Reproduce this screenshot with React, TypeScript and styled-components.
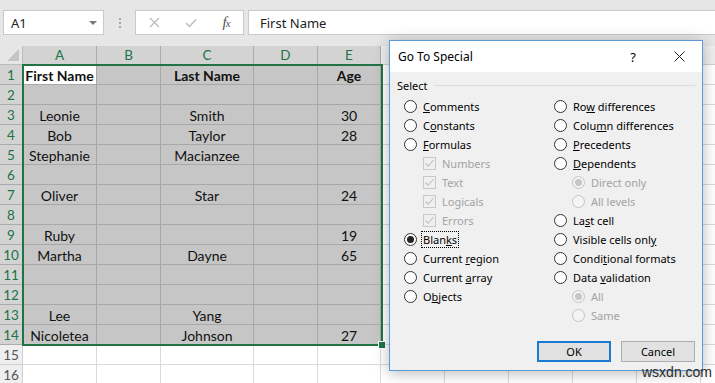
import React from 'react';
import styled, { createGlobalStyle, css } from 'styled-components';

const GlobalStyle = createGlobalStyle`
  html, body {
    margin: 0;
    padding: 0;
  }
  body {
    width: 715px;
    height: 383px;
    overflow: hidden;
    background: #ffffff;
    font-family: 'Lato', sans-serif;
  }
`;

const GREEN = '#217346';

const Window = styled.div`
  position: relative;
  width: 715px;
  height: 383px;
  overflow: hidden;
  display: flex;
  flex-direction: column;
  background: #ffffff;
`;

/* ---------- formula bar ---------- */

const FormulaBar = styled.div`
  height: 46px;
  flex: none;
  box-sizing: border-box;
  background: #e6e6e6;
  display: flex;
  align-items: flex-start;
  padding: 10px 0 0 3px;
`;

const NameBox = styled.div`
  width: 101px;
  height: 25px;
  box-sizing: border-box;
  background: #ffffff;
  border: 1px solid #c9c9c9;
  display: flex;
  align-items: center;
  justify-content: space-between;
  padding: 0 6px 0 7px;
  font-family: 'Noto Sans', sans-serif;
  font-size: 13px;
  color: #222;
`;

const DropArrow = styled.span`
  width: 0;
  height: 0;
  border-left: 4px solid transparent;
  border-right: 4px solid transparent;
  border-top: 4px solid #7a7a7a;
`;

const Grip = styled.div`
  width: 31px;
  height: 25px;
  display: flex;
  flex-direction: column;
  align-items: center;
  justify-content: center;
  gap: 2px;

  span {
    width: 2px;
    height: 2px;
    background: #a8a8a8;
  }
`;

const IconBox = styled.div`
  width: 109px;
  height: 25px;
  box-sizing: border-box;
  background: #ffffff;
  border: 1px solid #c9c9c9;
  display: grid;
  grid-template-columns: 36px 37px 34px;
  align-items: center;
  justify-items: center;
`;

const Fx = styled.span`
  font-family: 'Liberation Serif', serif;
  font-style: italic;
  font-size: 15px;
  color: #555;
  letter-spacing: -1px;

  small {
    font-size: 11px;
  }
`;

const FormulaInput = styled.div`
  flex: 1;
  margin-left: 4px;
  height: 25px;
  box-sizing: border-box;
  background: #ffffff;
  border: 1px solid #c9c9c9;
  border-right: none;
  display: flex;
  align-items: center;
  padding-left: 11px;
  font-family: 'Noto Sans', sans-serif;
  font-size: 13px;
  color: #222;
`;

/* ---------- sheet ---------- */

const COLS = [
  { label: 'A', w: 74 },
  { label: 'B', w: 64 },
  { label: 'C', w: 93 },
  { label: 'D', w: 64 },
  { label: 'E', w: 63 },
  { label: 'F', w: 64 },
  { label: 'G', w: 64 },
  { label: 'H', w: 64 },
  { label: 'I', w: 64 },
  { label: 'J', w: 64 },
  { label: 'K', w: 64 },
];

const Sheet = styled.div`
  display: grid;
  grid-template-columns: 23px ${COLS.map(c => `${c.w}px`).join(' ')};
  grid-template-rows: 19px repeat(16, 20px);
`;

const Corner = styled.div`
  grid-column: 1;
  grid-row: 1;
  background: #e6e6e6;
  border-right: 1px solid #bcbcbc;
  border-bottom: 1px solid #bcbcbc;
  position: relative;

  &::after {
    content: '';
    position: absolute;
    right: 3px;
    bottom: 3px;
    border-left: 12px solid transparent;
    border-bottom: 12px solid #c4c4c4;
  }
`;

const Header = styled.div<{ $sel: boolean; $row: number; $col: number }>`
  grid-row: ${p => p.$row};
  grid-column: ${p => p.$col};
  box-sizing: border-box;
  display: flex;
  align-items: center;
  justify-content: center;
  font-family: 'Lato', sans-serif;
  font-size: 13.5px;
  border-right: 1px solid ${p => (p.$sel ? '#ababab' : '#d0d0d0')};
  border-bottom: 1px solid ${p => (p.$sel ? '#ababab' : '#d0d0d0')};
  background: ${p => (p.$sel ? '#d3d3d3' : '#efefef')};
  color: ${p => (p.$sel ? GREEN : '#555')};
`;

const RowHead = styled(Header)`
  padding-top: 1px;
`;

const Cell = styled.div<{ $sel: boolean; $active: boolean; $bold: boolean; $row: number; $col: number }>`
  grid-row: ${p => p.$row};
  grid-column: ${p => p.$col};
  box-sizing: border-box;
  display: flex;
  align-items: center;
  justify-content: center;
  padding-top: 2px;
  font-family: 'Lato', sans-serif;
  font-size: 14px;
  white-space: nowrap;
  color: #111;
  font-weight: ${p => (p.$bold ? 700 : 400)};
  border-right: 1px solid ${p => (p.$sel ? '#a8a8a8' : '#dadada')};
  border-bottom: 1px solid ${p => (p.$sel ? '#a8a8a8' : '#dadada')};
  background: ${p => (p.$sel ? '#c6c6c6' : '#ffffff')};
  ${p =>
    p.$active &&
    css`
      background: #ffffff;
    `}
`;

const Selection = styled.div`
  grid-column: 2 / 7;
  grid-row: 2 / 16;
  margin: -1px -2px -1px -1px;
  border: 2px solid ${GREEN};
  position: relative;
  pointer-events: none;
`;

const FillHandle = styled.span`
  position: absolute;
  right: -5px;
  bottom: -5px;
  width: 6px;
  height: 6px;
  background: ${GREEN};
  border: 1px solid #ffffff;
`;

const DATA: string[][] = [
  ['First Name', '', 'Last Name', '', 'Age'],
  [],
  ['Leonie', '', 'Smith', '', '30'],
  ['Bob', '', 'Taylor', '', '28'],
  ['Stephanie', '', 'Macianzee', '', ''],
  [],
  ['Oliver', '', 'Star', '', '24'],
  [],
  ['Ruby', '', '', '', '19'],
  ['Martha', '', 'Dayne', '', '65'],
  [],
  [],
  ['Lee', '', 'Yang', '', ''],
  ['Nicoletea', '', 'Johnson', '', '27'],
  [],
  [],
];

/* ---------- dialog ---------- */

const Dialog = styled.div`
  position: absolute;
  left: 389px;
  top: 40px;
  width: 314px;
  height: 331px;
  box-sizing: border-box;
  border: 1px solid #5a9ad6;
  background: #f0f0f0;
  box-shadow: 0 2px 14px rgba(0, 0, 0, 0.28);
  display: flex;
  flex-direction: column;
  font-family: 'Noto Sans', sans-serif;
  font-size: 11px;
  color: #000;
`;

const TitleBar = styled.div`
  height: 31px;
  flex: none;
  background: #ffffff;
  display: flex;
  align-items: center;
  padding: 0 0 0 8px;
  font-size: 12px;
`;

const Title = styled.span`
  flex: 1;
`;

const TitleButton = styled.span<{ $w: number }>`
  width: ${p => p.$w}px;
  display: flex;
  justify-content: center;
  font-size: 13px;
`;

const Body = styled.div`
  flex: 1;
  display: flex;
  flex-direction: column;
  padding: 6px 7px 8px 7px;
`;

const GroupLabel = styled.div`
  display: flex;
  align-items: center;
  gap: 6px;
  height: 15px;

  &::after {
    content: '';
    flex: 1;
    height: 1px;
    background: #dcdcdc;
  }
`;

const Options = styled.div`
  display: grid;
  grid-template-columns: 150px 1fr;
  padding: 4px 0 0 7px;
`;

const OptionList = styled.div`
  display: flex;
  flex-direction: column;
`;

const Option = styled.div<{ $indent: number; $disabled: boolean }>`
  height: 19px;
  display: flex;
  align-items: center;
  gap: 6px;
  padding-left: ${p => p.$indent}px;
  color: ${p => (p.$disabled ? '#a3a3a3' : '#000')};
  white-space: nowrap;
`;

const Radio = styled.span<{ $checked: boolean; $disabled: boolean }>`
  width: 13px;
  height: 13px;
  flex: none;
  box-sizing: border-box;
  border-radius: 50%;
  border: 1px solid ${p => (p.$disabled ? '#c3c3c3' : '#333')};
  background: ${p => (p.$disabled ? '#f4f4f4' : '#fff')};
  display: flex;
  align-items: center;
  justify-content: center;

  &::after {
    content: '';
    display: ${p => (p.$checked ? 'block' : 'none')};
    width: 7px;
    height: 7px;
    border-radius: 50%;
    background: ${p => (p.$disabled ? '#c6c6c6' : '#222')};
  }
`;

const Check = styled.span`
  width: 13px;
  height: 13px;
  flex: none;
  box-sizing: border-box;
  border: 1px solid #c8c8c8;
  display: flex;
  align-items: center;
  justify-content: center;
`;

const Label = styled.span<{ $focus: boolean }>`
  ${p =>
    p.$focus &&
    css`
      outline: 1px dotted #000;
      outline-offset: 0;
      margin-left: -1px;
      padding: 0 1px;
    `}
`;

const ButtonRow = styled.div`
  margin-top: auto;
  display: flex;
  justify-content: flex-end;
  gap: 10px;
`;

const Button = styled.div<{ $default?: boolean }>`
  width: 74px;
  height: 21px;
  box-sizing: border-box;
  background: #e1e1e1;
  border: ${p => (p.$default ? '2px solid #1a7ad0' : '1px solid #adadad')};
  display: flex;
  align-items: center;
  justify-content: center;
  font-size: 11px;
`;

const Watermark = styled.span`
  position: absolute;
  left: 642px;
  top: 364px;
  font-family: 'Liberation Sans', sans-serif;
  font-size: 14px;
  color: #2a2a2a;
`;

type Opt = {
  label: string;
  key?: number;
  kind?: 'radio' | 'check';
  checked?: boolean;
  disabled?: boolean;
  indent?: number;
  focus?: boolean;
};

const LEFT: Opt[] = [
  { label: 'Comments', key: 0 },
  { label: 'Constants', key: 1 },
  { label: 'Formulas', key: 0 },
  { label: 'Numbers', kind: 'check', checked: true, disabled: true, indent: 19 },
  { label: 'Text', kind: 'check', checked: true, disabled: true, indent: 19 },
  { label: 'Logicals', kind: 'check', checked: true, disabled: true, indent: 19 },
  { label: 'Errors', kind: 'check', checked: true, disabled: true, indent: 19 },
  { label: 'Blanks', key: 4, checked: true, focus: true },
  { label: 'Current region', key: 8 },
  { label: 'Current array', key: 8 },
  { label: 'Objects', key: 1 },
];

const RIGHT: Opt[] = [
  { label: 'Row differences', key: 2 },
  { label: 'Column differences', key: 4 },
  { label: 'Precedents', key: 0 },
  { label: 'Dependents', key: 0 },
  { label: 'Direct only', checked: true, disabled: true, indent: 18 },
  { label: 'All levels', disabled: true, indent: 18 },
  { label: 'Last cell', key: 2 },
  { label: 'Visible cells only', key: 17 },
  { label: 'Conditional formats', key: 5 },
  { label: 'Data validation', key: 5 },
  { label: 'All', checked: true, disabled: true, indent: 18 },
  { label: 'Same', disabled: true, indent: 18 },
];

const Mnemonic: React.FC<{ text: string; at?: number }> = ({ text, at }) =>
  at === undefined ? (
    <>{text}</>
  ) : (
    <>
      {text.slice(0, at)}
      <u>{text[at]}</u>
      {text.slice(at + 1)}
    </>
  );

const OptionItem: React.FC<{ opt: Opt }> = ({ opt }) => (
  <Option $indent={opt.indent ?? 0} $disabled={!!opt.disabled}>
    {opt.kind === 'check' ? (
      <Check>
        <svg width="11" height="11" viewBox="0 0 11 11">
          <path d="M1.5 5.5 L4.2 8.2 L9.5 2" fill="none" stroke="#c2c2c2" strokeWidth="1.1" />
        </svg>
      </Check>
    ) : (
      <Radio $checked={!!opt.checked} $disabled={!!opt.disabled} />
    )}
    <Label $focus={!!opt.focus}>
      <Mnemonic text={opt.label} at={opt.key} />
    </Label>
  </Option>
);

const App: React.FC = () => {
  return (
    <Window>
      <GlobalStyle />
      <FormulaBar>
        <NameBox>
          A1
          <DropArrow />
        </NameBox>
        <Grip>
          <span />
          <span />
          <span />
        </Grip>
        <IconBox>
          <svg width="11" height="11" viewBox="0 0 11 11">
            <path d="M1 1 L10 10 M10 1 L1 10" stroke="#bdbdbd" strokeWidth="1.3" />
          </svg>
          <svg width="12" height="10" viewBox="0 0 12 10">
            <path d="M1 5 L4.5 8.5 L11 1.5" fill="none" stroke="#bdbdbd" strokeWidth="1.5" />
          </svg>
          <Fx>
            f<small>x</small>
          </Fx>
        </IconBox>
        <FormulaInput>First Name</FormulaInput>
      </FormulaBar>

      <Sheet>
        <Corner />
        {COLS.map((c, i) => (
          <Header key={c.label} $sel={i < 5} $row={1} $col={i + 2}>
            {c.label}
          </Header>
        ))}
        {DATA.map((row, r) => (
          <React.Fragment key={r}>
            <RowHead $sel={r < 14} $row={r + 2} $col={1}>
              {r + 1}
            </RowHead>
            {COLS.map((c, ci) => (
              <Cell
                key={c.label}
                $row={r + 2}
                $col={ci + 2}
                $sel={r < 14 && ci < 5}
                $active={r === 0 && ci === 0}
                $bold={r === 0}
              >
                {row[ci] ?? ''}
              </Cell>
            ))}
          </React.Fragment>
        ))}
        <Selection>
          <FillHandle />
        </Selection>
      </Sheet>

      <Dialog>
        <TitleBar>
          <Title>Go To Special</Title>
          <TitleButton $w={46}>?</TitleButton>
          <TitleButton $w={46}>
            <svg width="11" height="11" viewBox="0 0 11 11">
              <path d="M0.5 0.5 L10.5 10.5 M10.5 0.5 L0.5 10.5" stroke="#222" strokeWidth="1" />
            </svg>
          </TitleButton>
        </TitleBar>
        <Body>
          <GroupLabel>Select</GroupLabel>
          <Options>
            <OptionList>
              {LEFT.map(o => (
                <OptionItem key={o.label} opt={o} />
              ))}
            </OptionList>
            <OptionList>
              {RIGHT.map(o => (
                <OptionItem key={o.label} opt={o} />
              ))}
            </OptionList>
          </Options>
          <ButtonRow>
            <Button $default>OK</Button>
            <Button>Cancel</Button>
          </ButtonRow>
        </Body>
      </Dialog>

      <Watermark>wsxdn.com</Watermark>
    </Window>
  );
};

export default App;
